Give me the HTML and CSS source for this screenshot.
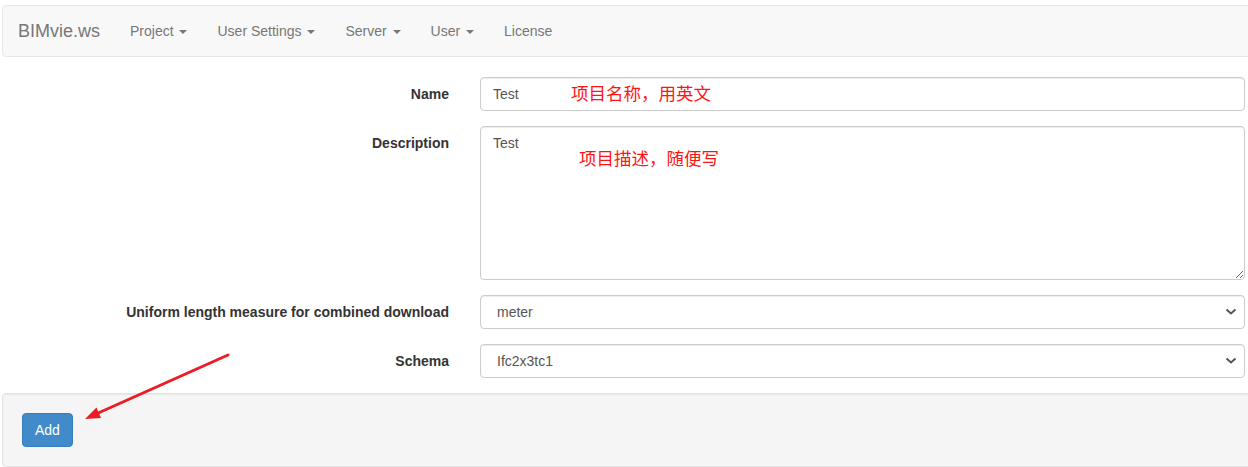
FILE: index.html
```html
<!DOCTYPE html>
<html lang="en">
<head>
<meta charset="utf-8">
<title>BIMvie.ws - New project</title>
<link rel="stylesheet" href="styles.css">
</head>
<body>
<div class="page">
  <nav class="navbar">
    <a class="brand" href="#">BIMvie.ws</a>
    <ul class="nav">
      <li><a href="#">Project <span class="caret"></span></a></li>
      <li><a href="#">User Settings <span class="caret"></span></a></li>
      <li><a href="#">Server <span class="caret"></span></a></li>
      <li><a href="#">User <span class="caret"></span></a></li>
      <li><a href="#">License</a></li>
    </ul>
  </nav>

  <form class="form">
    <div class="group">
      <label class="label" for="name">Name</label>
      <div class="field">
        <input class="control" id="name" type="text" value="Test">
        <span class="note note-name">项目名称，用英文</span>
      </div>
    </div>
    <div class="group">
      <label class="label" for="desc">Description</label>
      <div class="field">
        <textarea class="control area" id="desc">Test</textarea>
        <span class="note note-desc">项目描述，随便写</span>
      </div>
    </div>
    <div class="group">
      <label class="label" for="unit">Uniform length measure for combined download</label>
      <div class="field">
        <select class="control select" id="unit"><option>meter</option></select>
        <svg class="chev" width="12" height="8" viewBox="0 0 12 8"><path d="M1.5 1.5 L6 5.5 L10.5 1.5" fill="none" stroke="#555" stroke-width="2"/></svg>
      </div>
    </div>
    <div class="group">
      <label class="label" for="schema">Schema</label>
      <div class="field">
        <select class="control select" id="schema"><option>Ifc2x3tc1</option></select>
        <svg class="chev" width="12" height="8" viewBox="0 0 12 8"><path d="M1.5 1.5 L6 5.5 L10.5 1.5" fill="none" stroke="#555" stroke-width="2"/></svg>
      </div>
    </div>
    <div class="well">
      <button class="btn" type="button">Add</button>
    </div>
  </form>

  <svg class="arrow" width="1248" height="467" viewBox="0 0 1248 467">
    <line x1="228" y1="355" x2="96" y2="414" stroke="#ec1c24" stroke-width="3" stroke-linecap="round"/>
    <polygon points="85,419 101,418 96.5,407.5" fill="#ec1c24"/>
  </svg>
</div>
</body>
</html>
```

FILE: styles.css
```css
* { box-sizing: border-box; }
html, body { margin: 0; padding: 0; }
body {
  font-family: "Liberation Sans", Arial, sans-serif;
  font-size: 14px;
  line-height: 20px;
  color: #333;
  background: #fff;
  overflow: hidden;
  width: 1248px;
  height: 467px;
}
.page {
  position: relative;
  width: 1248px;
  height: 467px;
  padding-top: 5px;
}
.navbar {
  display: flex;
  align-items: center;
  height: 52px;
  margin-left: 2px;
  width: 1270px;
  background: #f8f8f8;
  border: 1px solid #e7e7e7;
  border-radius: 4px;
  margin-bottom: 20px;
}
.brand {
  font-size: 18px;
  line-height: 20px;
  color: #777;
  text-decoration: none;
  padding: 15px;
}
.nav {
  display: flex;
  list-style: none;
  margin: 0;
  padding: 0;
}
.nav a {
  display: block;
  padding: 15px;
  color: #777;
  text-decoration: none;
  line-height: 20px;
}
.caret {
  display: inline-block;
  width: 0;
  height: 0;
  margin-left: 2px;
  vertical-align: middle;
  border-top: 4px solid #777;
  border-left: 4px solid transparent;
  border-right: 4px solid transparent;
}
.form { margin: 0; }
.group {
  display: grid;
  grid-template-columns: 449px 765px;
  column-gap: 31px;
  margin-bottom: 15px;
}
.label {
  text-align: right;
  font-weight: bold;
  padding-top: 7px;
  color: #333;
}
.field { position: relative; }
.control {
  display: block;
  width: 100%;
  height: 34px;
  padding: 6px 12px;
  font-family: "Liberation Sans", Arial, sans-serif;
  font-size: 14px;
  line-height: 20px;
  color: #555;
  background: #fff;
  border: 1px solid #ccc;
  border-radius: 4px;
  box-shadow: inset 0 1px 1px rgba(0,0,0,.075);
  margin: 0;
}
.area {
  height: 154px;
  resize: vertical;
}
.select {
  appearance: none;
  -webkit-appearance: none;
  padding-left: 16px;
}
.chev {
  position: absolute;
  right: 8px;
  top: 13px;
  pointer-events: none;
}
.note {
  position: absolute;
  font-family: "Noto Sans CJK SC", sans-serif;
  font-size: 17.5px;
  line-height: 20px;
  color: #ff1414;
  white-space: nowrap;
}
.note-name { left: 91px; top: 6px; }
.note-desc { left: 99px; top: 22px; }
.well {
  margin-left: 2px;
  width: 1270px;
  padding: 19px;
  background: #f5f5f5;
  border: 1px solid #e3e3e3;
  border-radius: 4px;
  box-shadow: inset 0 1px 1px rgba(0,0,0,.05);
}
.btn {
  display: block;
  height: 34px;
  padding: 6px 12px;
  font-family: "Liberation Sans", Arial, sans-serif;
  font-size: 14px;
  line-height: 20px;
  color: #fff;
  background: #428bca;
  border: 1px solid #357ebd;
  border-radius: 4px;
  cursor: pointer;
}
.arrow {
  position: absolute;
  left: 0;
  top: 0;
  pointer-events: none;
}
```
